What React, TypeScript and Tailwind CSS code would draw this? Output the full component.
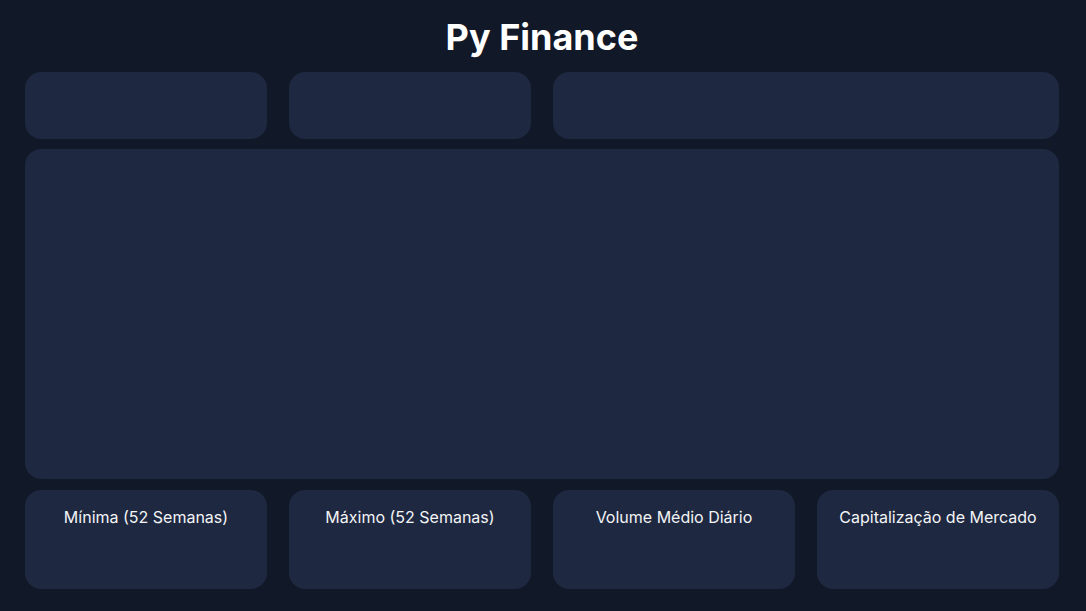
const metricas = [
  'Mínima (52 Semanas)',
  'Máximo (52 Semanas)',
  'Volume Médio Diário',
  'Capitalização de Mercado',
];

export default function App() {
  return (
    <div className="min-h-screen w-full bg-[#111827] font-['Inter',sans-serif] text-white">
      <div className="w-[1034px] ml-[25px] flex flex-col">
        <h1 className="pt-[17px] pb-[15px] text-center text-4xl leading-10 font-bold">Py Finance</h1>

        {/* Top row */}
        <div className="grid grid-cols-4 gap-[22px] h-[67px]">
          <div className="rounded-2xl bg-[#1e2840]" />
          <div className="rounded-2xl bg-[#1e2840]" />
          <div className="col-span-2 rounded-2xl bg-[#1e2840]" />
        </div>

        {/* Chart */}
        <div className="mt-[10px] h-[330px] rounded-2xl bg-[#1e2840]" />

        {/* Metrics */}
        <div className="mt-[11px] grid grid-cols-4 gap-[22px]">
          {metricas.map((m) => (
            <div key={m} className="h-[99px] rounded-2xl bg-[#1e2840] pt-[15px] text-center text-base text-gray-100">
              {m}
            </div>
          ))}
        </div>
      </div>
    </div>
  );
}
